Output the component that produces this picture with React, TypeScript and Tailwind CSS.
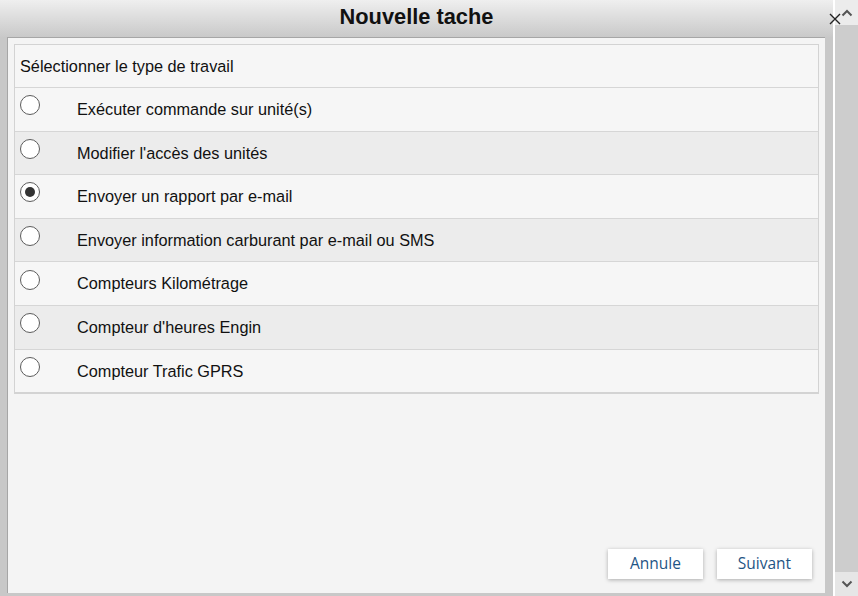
import React, { useState } from "react";

const options = [
  "Exécuter commande sur unité(s)",
  "Modifier l'accès des unités",
  "Envoyer un rapport par e-mail",
  "Envoyer information carburant par e-mail ou SMS",
  "Compteurs Kilométrage",
  "Compteur d'heures Engin",
  "Compteur Trafic GPRS",
];

function Radio({ checked }: { checked: boolean }) {
  return (
    <span className="flex h-[20px] w-[20px] shrink-0 items-center justify-center rounded-full border border-[#5c5c5c] bg-white">
      {checked && <span className="h-[10px] w-[10px] rounded-full bg-[#333]" />}
    </span>
  );
}

export default function App() {
  const [selected, setSelected] = useState(2);

  return (
    <div className="relative flex h-[596px] w-[858px] overflow-hidden bg-white font-['Liberation_Sans',Arial,sans-serif]">
      {/* dialog frame */}
      <div className="flex w-[833px] flex-col bg-[#c8c8c8]">
        <div className="flex h-[37px] shrink-0 items-center justify-center bg-gradient-to-b from-[#efefef] to-[#c9c9c9]">
          <h1 className="-mt-[2px] text-[21.8px] font-bold text-[#111]">Nouvelle tache</h1>
        </div>

        <div className="ml-[7px] flex h-[556px] w-[818px] flex-col border-l border-t border-[#a6a6a6] bg-[#f4f4f4] px-[6px] pt-[6px]">
          <div className="border border-b-2 border-[#d3d3d3] bg-[#f6f6f6]">
            <div className="flex h-[42px] items-center pl-[5px] text-[16.3px] text-[#111]">
              Sélectionner le type de travail
            </div>
            {options.map((label, i) => (
              <label
                key={label}
                onClick={() => setSelected(i)}
                className={`flex h-[43.6px] cursor-pointer items-center border-t border-[#d6d6d6] pl-[5px] text-[16.3px] text-[#111] ${
                  i % 2 === 1 ? "bg-[#ececec]" : "bg-[#f6f6f6]"
                }`}
              >
                <span className="-mt-[8px]">
                  <Radio checked={selected === i} />
                </span>
                <span className="ml-[37px]">{label}</span>
              </label>
            ))}
          </div>

          <div className="flex-1" />

          <div className="flex justify-end gap-[14px] pb-[14px] pr-[7px]">
            <button className="h-[30px] w-[95px] bg-white font-['Open_Sans',sans-serif] text-[15.5px] text-[#1f5585] shadow-[0_1px_4px_rgba(0,0,0,0.3)]">
              Annule
            </button>
            <button className="h-[30px] w-[95px] bg-white font-['Open_Sans',sans-serif] text-[15.5px] text-[#1f5585] shadow-[0_1px_4px_rgba(0,0,0,0.3)]">
              Suivant
            </button>
          </div>
        </div>
      </div>

      {/* window scrollbar */}
      <div className="ml-[2px] flex w-[23px] flex-col bg-[#cdcdcd]">
        <div className="flex h-[25px] items-center justify-center bg-[#ececec]">
          <svg width="12" height="8" viewBox="0 0 12 8">
            <path d="M1.5 6.5 L6 2 L10.5 6.5" fill="none" stroke="#555" strokeWidth="2" />
          </svg>
        </div>
        <div className="flex-1" />
        <div className="flex h-[24px] items-center justify-center bg-[#e6e6e6]">
          <svg width="12" height="8" viewBox="0 0 12 8">
            <path d="M1.5 1.5 L6 6 L10.5 1.5" fill="none" stroke="#555" strokeWidth="2" />
          </svg>
        </div>
      </div>

      {/* close button */}
      <button className="absolute left-[828px] top-[12px] flex h-[13px] w-[13px] items-center justify-center">
        <svg width="12" height="12" viewBox="0 0 12 12">
          <path d="M1 1 L11 11 M11 1 L1 11" stroke="#222" strokeWidth="1.4" />
        </svg>
      </button>
    </div>
  );
}
